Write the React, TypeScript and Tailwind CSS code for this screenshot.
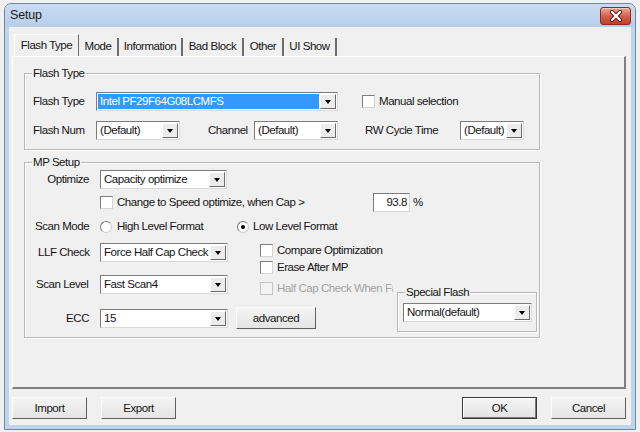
import React from "react";

function Combo({
  className,
  text,
  selected = false,
}: {
  className: string;
  text: string;
  selected?: boolean;
}) {
  return (
    <div
      className={`flex h-[19px] shrink-0 items-center border border-t-[#7b7b7b] border-l-[#7b7b7b] border-r-[#dadada] border-b-[#dadada] bg-white ${className}`}
    >
      <div className="flex h-full min-w-0 flex-1 items-center p-[1px]">
        <span
          className={`flex h-full w-full items-center overflow-hidden whitespace-nowrap pl-[2px] ${
            selected ? "bg-[#3399ff] text-white" : ""
          }`}
        >
          {text}
        </span>
      </div>
      <div className="mr-[1px] flex h-[15px] w-[16px] shrink-0 items-center justify-center border border-t-white border-l-white border-r-[#6b6b6b] border-b-[#6b6b6b] bg-[#ececec]">
        <div className="h-0 w-0 border-x-[3.5px] border-t-[4px] border-x-transparent border-t-black" />
      </div>
    </div>
  );
}

function Check({ disabled = false }: { disabled?: boolean }) {
  return (
    <div
      className={`h-[13px] w-[13px] shrink-0 border ${
        disabled
          ? "border-[#c4c4c4] bg-[#f3f3f3]"
          : "border-t-[#7d7d7d] border-l-[#7d7d7d] border-r-[#d4d4d4] border-b-[#d4d4d4] bg-white"
      }`}
    />
  );
}

function Radio({ checked = false }: { checked?: boolean }) {
  return (
    <div className="flex h-[12px] w-[12px] shrink-0 items-center justify-center rounded-full border border-t-[#7a7a7a] border-l-[#7a7a7a] border-r-[#cfcfcf] border-b-[#cfcfcf] bg-white">
      {checked && <div className="h-[4px] w-[4px] rounded-full bg-black" />}
    </div>
  );
}

function Btn({
  className,
  children,
  def = false,
}: {
  className: string;
  children: React.ReactNode;
  def?: boolean;
}) {
  if (def) {
    return (
      <div className={`flex h-[22px] shrink-0 border border-[#3a3a3a] ${className}`}>
        <div className="flex flex-1 items-center justify-center border border-t-white border-l-white border-r-[#7a7a7a] border-b-[#7a7a7a] bg-gradient-to-b from-[#f4f4f4] to-[#e4e4e4]">
          {children}
        </div>
      </div>
    );
  }
  return (
    <div
      className={`flex h-[22px] shrink-0 items-center justify-center border border-t-[#fbfbfb] border-l-[#fbfbfb] border-r-[#5f5f5f] border-b-[#5f5f5f] bg-gradient-to-b from-[#f4f4f4] to-[#e4e4e4] ${className}`}
    >
      {children}
    </div>
  );
}

function Group({
  title,
  className,
  children,
}: {
  title: string;
  className: string;
  children?: React.ReactNode;
}) {
  return (
    <div
      className={`relative shrink-0 border border-[#b8b8b8] shadow-[inset_1px_1px_0_#ffffff,1px_1px_0_#ffffff] ${className}`}
    >
      <span className="absolute -top-[8px] left-[7px] bg-[#f0f0f0] px-[1px] leading-[14px]">
        {title}
      </span>
      {children}
    </div>
  );
}

function CloseBtn() {
  return (
    <div className="flex h-[18px] w-[31px] items-center justify-center rounded-[3px] border border-[#8a2c1f] bg-gradient-to-b from-[#e9a898] via-[#d1624f] to-[#c2402c] shadow-[inset_0_1px_0_#f3c6bb]">
      <svg width="14" height="12" viewBox="0 0 14 12">
        <path d="M3 2 L11 10 M11 2 L3 10" stroke="#5b1a10" strokeWidth="4" strokeLinecap="round" />
        <path d="M3 2 L11 10 M11 2 L3 10" stroke="#ffffff" strokeWidth="2.2" strokeLinecap="round" />
      </svg>
    </div>
  );
}

export default function App() {
  const tabs = [
    { t: "Mode", w: "w-[40px]" },
    { t: "Information", w: "w-[64px]" },
    { t: "Bad Block", w: "w-[61px]" },
    { t: "Other", w: "w-[40px]" },
    { t: "UI Show", w: "w-[53px]" },
  ];
  return (
    <div className="h-[432px] w-[640px] overflow-hidden bg-[#f1f1f1] pl-[4px] pt-[3px] font-['Liberation_Sans',Arial,sans-serif] text-[11.5px] leading-[13px] tracking-[-0.45px] text-[#141414]">
      <div className="flex h-[427px] w-[632px] flex-col rounded-t-[7px] border border-[#6c88aa] bg-[#bfd4ed]">
        {/* Title bar */}
        <div className="flex h-[23px] shrink-0 items-center justify-between rounded-t-[6px] bg-gradient-to-b from-[#cadcf1] to-[#b7cee9] pl-[5px] pr-[4px]">
          <span className="text-[12.5px] tracking-[-0.2px] text-[#1b1b1b]">Setup</span>
          <CloseBtn />
        </div>

        {/* Client */}
        <div className="mx-[4px] mb-[4px] flex flex-1 flex-col bg-[#f0f0f0] pt-[7px]">
          {/* Tabs */}
          <div className="ml-[5px] flex h-[22px] items-end">
            <div className="flex h-[22px] w-[65px] items-center justify-center border-l border-t border-r border-l-white border-t-white border-r-[#6a6a6a]">
              Flash Type
            </div>
            {tabs.map((tb) => (
              <div
                key={tb.t}
                className={`flex h-[18px] items-center justify-center border-r-2 border-r-[#6d6d6d] pb-[2px] ${tb.w}`}
              >
                {tb.t}
              </div>
            ))}
          </div>

          {/* Panel */}
          <div className="ml-[3px] h-[333px] w-[614px] border-l border-t border-r-2 border-b-2 border-l-white border-t-white border-r-[#7f7f7f] border-b-[#7f7f7f] pl-[11px] pt-[16px]">
            {/* Flash Type group */}
            <Group title="Flash Type" className="h-[77px] w-[516px] pt-[18px]">
              <div className="flex h-[19px] items-center">
                <span className="w-[71px] shrink-0 pl-[8px]">Flash Type</span>
                <Combo className="w-[242px]" text="Intel PF29F64G08LCMFS" selected />
                <div className="ml-[24px]">
                  <Check />
                </div>
                <span className="ml-[4px]">Manual selection</span>
              </div>
              <div className="mt-[10px] flex h-[19px] items-center">
                <span className="w-[71px] shrink-0 pl-[8px]">Flash Num</span>
                <Combo className="w-[84px]" text="(Default)" />
                <span className="ml-[28px] w-[46px] shrink-0">Channel</span>
                <Combo className="w-[84px]" text="(Default)" />
                <span className="ml-[27px] w-[95px] shrink-0">RW Cycle Time</span>
                <Combo className="w-[64px]" text="(Default)" />
              </div>
            </Group>

            {/* MP Setup group */}
            <Group title="MP Setup" className="mt-[12px] h-[176px] w-[516px] pt-[7px]">
              <div className="flex h-[19px] items-center">
                <span className="w-[75px] shrink-0 pr-[11px] text-right">Optimize</span>
                <Combo className="w-[127px]" text="Capacity optimize" />
              </div>

              <div className="mt-[4px] flex h-[19px] items-center pl-[75px]">
                <div className="flex w-[273px] shrink-0 items-center">
                  <Check />
                  <span className="ml-[4px] whitespace-nowrap">
                    Change to Speed optimize, when Cap &gt;
                  </span>
                </div>
                <div className="flex h-[19px] w-[37px] shrink-0 items-center justify-end border border-t-[#7b7b7b] border-l-[#7b7b7b] border-r-[#dadada] border-b-[#dadada] bg-white pr-[2px]">
                  93.8
                </div>
                <span className="ml-[3px]">%</span>
              </div>

              <div className="mt-[8px] flex h-[13px] items-center">
                <span className="w-[75px] shrink-0 pl-[10px]">Scan Mode</span>
                <div className="flex w-[137px] shrink-0 items-center">
                  <Radio />
                  <span className="ml-[5px]">High Level Format</span>
                </div>
                <Radio checked />
                <span className="ml-[4px]">Low Level Format</span>
              </div>

              <div className="mt-[10px] flex h-[18px] items-start">
                <span className="flex h-[19px] w-[75px] shrink-0 items-center pl-[13px]">LLF Check</span>
                <Combo className="w-[128px]" text="Force Half Cap Check" />
                <div className="ml-[32px] mt-[1px] flex items-center">
                  <Check />
                  <span className="ml-[4px]">Compare Optimization</span>
                </div>
              </div>

              <div className="flex h-[13px] items-center pl-[235px]">
                <Check />
                <span className="ml-[4px]">Erase After MP</span>
              </div>

              <div className="mt-[1px] flex h-[17px] items-start">
                <span className="flex h-[19px] w-[75px] shrink-0 items-center pl-[11px]">Scan Level</span>
                <Combo className="w-[128px]" text="Fast Scan4" />
                <div className="ml-[32px] mt-[7px] flex items-center">
                  <Check disabled />
                  <span className="ml-[4px] w-[116px] overflow-hidden whitespace-nowrap text-[#a3a3a3]">
                    Half Cap Check When Fail
                  </span>
                </div>
              </div>

              <div className="flex h-[39px] items-start">
                <span className="mt-[17px] flex h-[19px] w-[75px] shrink-0 items-center justify-end pr-[11px]">
                  ECC
                </span>
                <Combo className="mt-[17px] w-[128px]" text="15" />
                <Btn className="ml-[8px] mt-[15px] w-[80px]">advanced</Btn>
                <Group title="Special Flash" className="ml-[81px] h-[40px] w-[140px] pl-[5px] pt-[10px]">
                  <Combo className="w-[129px]" text="Normal(default)" />
                </Group>
              </div>
            </Group>
          </div>

          {/* Bottom buttons */}
          <div className="mt-[8px] flex items-center justify-between pl-[3px] pr-[5px]">
            <div className="flex">
              <Btn className="w-[75px]">Import</Btn>
              <Btn className="ml-[14px] w-[75px]">Export</Btn>
            </div>
            <div className="flex">
              <Btn className="w-[75px]" def>
                OK
              </Btn>
              <Btn className="ml-[14px] w-[75px]">Cancel</Btn>
            </div>
          </div>
        </div>
      </div>
    </div>
  );
}
